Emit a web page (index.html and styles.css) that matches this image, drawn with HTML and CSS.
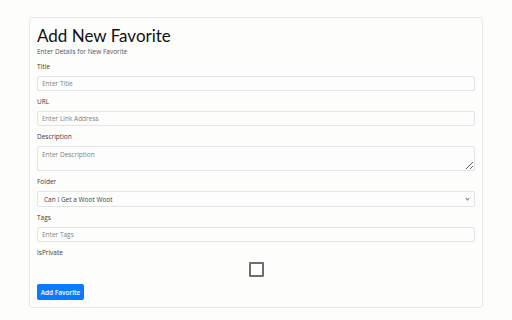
FILE: index.html
```html
<!DOCTYPE html>
<html>
<head>
<meta charset="utf-8">
<link rel="stylesheet" href="styles.css">
</head>
<body>
<div class="page">
  <div class="card">
    <h1 class="title">Add New Favorite</h1>
    <p class="subtitle">Enter Details for New Favorite</p>
    <form class="form">
      <div class="group">
        <label class="label">Title</label>
        <input class="control" type="text" placeholder="Enter Title">
      </div>
      <div class="group">
        <label class="label">URL</label>
        <input class="control" type="text" placeholder="Enter Link Address">
      </div>
      <div class="group">
        <label class="label">Description</label>
        <textarea class="control area" placeholder="Enter Description"></textarea>
      </div>
      <div class="group">
        <label class="label">Folder</label>
        <div class="select-wrap">
          <select class="control select">
            <option>Can I Get a Woot Woot</option>
          </select>
        </div>
      </div>
      <div class="group">
        <label class="label">Tags</label>
        <input class="control" type="text" placeholder="Enter Tags">
      </div>
      <div class="group">
        <label class="label">IsPrivate</label>
        <div class="check-row"><input class="check" type="checkbox"></div>
      </div>
      <button class="btn" type="button">Add Favorite</button>
    </form>
  </div>
</div>
</body>
</html>
```
FILE: styles.css
```css
html, body {
  margin: 0;
  padding: 0;
  background: #fdfdfb;
}
body {
  font-family: "Open Sans", "Noto Sans", sans-serif;
  color: #333;
}
.page {
  padding: 17px 29px 0 29px;
}
.card {
  width: 454px;
  box-sizing: border-box;
  border: 1px solid #e9e9e9;
  border-radius: 3px;
  padding: 7px 7px 7px 7px;
  background: #fdfdfb;
}
.title {
  margin: 0;
  font-family: "Lato", "Open Sans", sans-serif;
  font-size: 17px;
  line-height: 22px;
  font-weight: 400;
  color: #111;
}
.subtitle {
  margin: 0 0 6px 0;
  font-size: 6.5px;
  line-height: 9px;
  color: #555;
}
.form {
  display: flex;
  flex-direction: column;
}
.group {
  display: flex;
  flex-direction: column;
  margin-bottom: 6px;
}
.label {
  font-size: 6.5px;
  line-height: 10px;
  margin-bottom: 4px;
  color: #3a3a3a;
}
.control {
  display: block;
  box-sizing: border-box;
  height: 15px;
  width: 100%;
  margin: 0;
  border: 1px solid #e3e4e8;
  border-radius: 2px;
  background: #fdfdfb;
  padding: 0 4px;
  font-family: "Open Sans", "Noto Sans", sans-serif;
  font-size: 6.5px;
  color: #495057;
}
.control::placeholder {
  color: #7c8288;
}
.area {
  height: 25px;
  padding-top: 3px;
  resize: vertical;
}
.select-wrap {
  position: relative;
  line-height: 0;
}
.select-wrap::after {
  content: "";
  position: absolute;
  right: 6px;
  top: 6px;
  width: 2px;
  height: 2px;
  border-right: 1px solid #777;
  border-bottom: 1px solid #777;
  transform: rotate(45deg);
  pointer-events: none;
}
.select {
  -webkit-appearance: none;
  appearance: none;
  height: 16px;
  padding-left: 6px;
  color: #3d4349;
}
.check-row {
  display: flex;
  justify-content: center;
}
.check {
  appearance: none;
  -webkit-appearance: none;
  box-sizing: border-box;
  width: 15px;
  height: 15px;
  margin: 0;
  border: 2px solid #6e6e6e;
  border-radius: 1px;
  background: #fff;
}
.btn {
  align-self: flex-start;
  margin-top: 1px;
  height: 16px;
  width: 47px;
  padding: 0;
  border: none;
  border-radius: 2px;
  background: #0a7bff;
  color: #fff;
  font-family: "Open Sans", "Noto Sans", sans-serif;
  font-size: 6.5px;
  font-weight: 600;
}
```
